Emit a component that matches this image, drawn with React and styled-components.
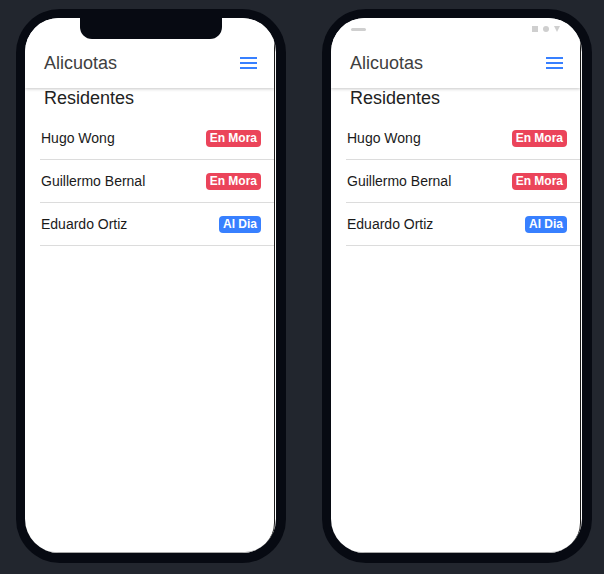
import React from "react";
import styled, { createGlobalStyle } from "styled-components";

const Global = createGlobalStyle`
  html, body { margin: 0; padding: 0; background: #22262e; }
  body { font-family: "Liberation Sans", Arial, sans-serif; }
`;

const Page = styled.div`
  display: flex;
  gap: 36px;
  padding: 9px 0 0 16px;
  height: 574px;
  box-sizing: border-box;
`;

const Phone = styled.div`
  width: 270px;
  height: 554px;
  box-sizing: border-box;
  padding: 9px 10px 10px 9px;
  background: #070a12;
  border-radius: 44px;
  display: flex;
`;

const Screen = styled.div`
  position: relative;
  flex: 1;
  background: #fff;
  border-radius: 34px;
  overflow: hidden;
  display: flex;
`;

const Viewport = styled.div`
  flex: 1;
  display: flex;
  flex-direction: column;
  margin-right: 1px;
  border-right: 1px solid #1c1c1c;
  border-bottom: 1px solid #a8a8a8;
  border-radius: 0 30px 30px 30px;
`;

const Notch = styled.div`
  position: absolute;
  top: 0;
  left: 50%;
  transform: translateX(-50%);
  width: 142px;
  height: 21px;
  background: #070a12;
  border-radius: 0 0 12px 12px;
  z-index: 3;
`;

const StatusBar = styled.div`
  position: absolute;
  top: 8px;
  left: 20px;
  right: 22px;
  display: flex;
  justify-content: space-between;
  align-items: center;
  z-index: 3;
`;

const Dash = styled.div`
  width: 15px;
  height: 3px;
  border-radius: 2px;
  background: #cfcfcf;
`;

const StatusIcons = styled.div`
  display: flex;
  gap: 5px;
  align-items: center;
`;

const Header = styled.header`
  position: relative;
  z-index: 2;
  height: 70px;
  box-sizing: border-box;
  padding: 20px 17px 0 19px;
  display: flex;
  align-items: center;
  justify-content: space-between;
  background: #fff;
  box-shadow: 0 1px 3px rgba(0, 0, 0, 0.22);
`;

const Title = styled.div`
  font-size: 18px;
  color: #404040;
  line-height: 22px;
`;

const MenuButton = styled.div`
  width: 17px;
  display: flex;
  flex-direction: column;
  gap: 3px;
`;

const MenuLine = styled.span`
  display: block;
  height: 2px;
  background: #3880ff;
`;

const Section = styled.div`
  font-size: 18px;
  color: #222;
  line-height: 20px;
  padding-left: 19px;
`;

const List = styled.div`
  margin: 9px 0 0 15px;
  display: flex;
  flex-direction: column;
`;

const Row = styled.div`
  height: 42px;
  border-bottom: 1px solid #dcdcdc;
  display: flex;
  align-items: center;
  justify-content: space-between;
  padding: 0 13px 0 1px;
`;

const Name = styled.span`
  font-size: 14px;
  color: #1a1a1a;
`;

const Badge = styled.span`
  font-size: 12px;
  font-weight: bold;
  line-height: 13px;
  padding: 2px 4px;
  border-radius: 4px;
  color: #fff;
  background: ${(p) => (p.$ok ? "#3880ff" : "#eb445a")};
`;

const residents = [
  { name: "Hugo Wong", ok: false },
  { name: "Guillermo Bernal", ok: false },
  { name: "Eduardo Ortiz", ok: true },
];

function Device({ notch }) {
  return (
    <Phone>
      <Screen>
        {notch ? (
          <Notch />
        ) : (
          <StatusBar>
            <Dash />
            <StatusIcons>
              <svg width="6" height="6" viewBox="0 0 6 6">
                <rect width="6" height="6" fill="#cfcfcf" />
              </svg>
              <svg width="6" height="6" viewBox="0 0 6 6">
                <circle cx="3" cy="3" r="3" fill="#cfcfcf" />
              </svg>
              <svg width="6" height="6" viewBox="0 0 6 6">
                <path d="M0 0 L6 0 L3 6 Z" fill="#cfcfcf" />
              </svg>
            </StatusIcons>
          </StatusBar>
        )}
        <Viewport>
          <Header>
            <Title>Alicuotas</Title>
            <MenuButton>
              <MenuLine />
              <MenuLine />
              <MenuLine />
            </MenuButton>
          </Header>
          <Section>Residentes</Section>
          <List>
            {residents.map((r) => (
              <Row key={r.name}>
                <Name>{r.name}</Name>
                <Badge $ok={r.ok}>{r.ok ? "Al Dia" : "En Mora"}</Badge>
              </Row>
            ))}
          </List>
        </Viewport>
      </Screen>
    </Phone>
  );
}

export default function App() {
  return (
    <>
      <Global />
      <Page>
        <Device notch />
        <Device />
      </Page>
    </>
  );
}
